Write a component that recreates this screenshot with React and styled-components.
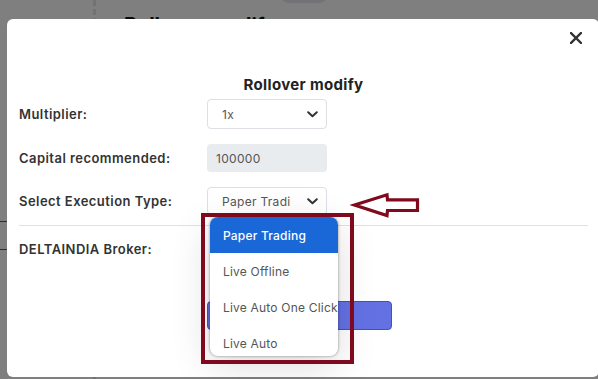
import React from 'react';
import styled, { createGlobalStyle } from 'styled-components';

const FONT = `Inter, "Open Sans", "Liberation Sans", sans-serif`;
const MAROON = '#7f0a1d';

const Global = createGlobalStyle`
  html, body { margin: 0; padding: 0; }
  body {
    width: 598px; height: 379px; overflow: hidden; background: #fff;
    font-family: ${FONT};
  }
`;

const Page = styled.div`
  position: relative;
  width: 598px;
  height: 379px;
  overflow: hidden;
`;

/* ---------- background page (under the overlay) ---------- */
const BackPage = styled.div`
  display: flex;
  height: 100%;
`;
const Gutter = styled.div`
  width: 93px;
  border-right: 3px dashed #e4e4ea;
  display: flex;
  flex-direction: column;
  padding-top: 221px;
  gap: 27px;
`;
const BlueRule = styled.div`
  height: 1px;
  background: #3b55d8;
`;
const BackMain = styled.div`
  flex: 1;
  display: flex;
  flex-direction: column;
`;
const Crumbs = styled.div`
  display: flex;
  align-items: center;
  margin-top: -19px;
  padding-left: 86px;
  height: 19px;
`;
const Crumb = styled.span`
  font: 400 12.5px ${FONT};
  color: #5a49c8;
  width: 99px;
  white-space: nowrap;
  overflow: hidden;
`;
const Pill = styled.span`
  width: 46px;
  height: 24px;
  border-radius: 8px;
  background: #e4e4ee;
`;
const BackTitle = styled.h1`
  margin: 13px 0 0 28px;
  font: 700 20px/24px ${FONT};
  color: #111;
`;

/* ---------- overlay + modal ---------- */
const Overlay = styled.div`
  position: absolute;
  inset: 0;
  background: rgba(0, 0, 0, 0.5);
  padding: 19px 0 0 7px;
`;
const Modal = styled.div`
  position: relative;
  width: 592px;
  height: 358px;
  background: #fff;
  border-radius: 6px;
  box-sizing: border-box;
  padding: 0 11px 0 12px;
  font-family: ${FONT};
`;
const Header = styled.div`
  display: flex;
  justify-content: flex-end;
  padding: 13px 6px 0 0;
  height: 12px;
`;
const CloseBtn = styled.button`
  border: 0;
  background: none;
  padding: 0;
  width: 12px;
  height: 12px;
  display: flex;
  cursor: pointer;
`;
const Title = styled.h2`
  margin: 31px 0 0;
  text-align: center;
  font: 700 15px/20px ${FONT};
  letter-spacing: 0.35px;
  color: #222;
`;
const Row = styled.div`
  display: grid;
  grid-template-columns: 188px 120px;
  align-items: center;
  height: ${p => p.$h}px;
  margin-top: ${p => p.$mt}px;
`;
const Label = styled.label`
  font: 600 13px ${FONT};
  letter-spacing: 0.45px;
  color: #333;
  white-space: nowrap;
`;
const SelectBox = styled.div`
  position: relative;
  height: 100%;
  box-sizing: border-box;
  border: 1px solid #dcdfe3;
  border-radius: 4px;
  display: flex;
  align-items: center;
  padding: 0 35px 0 14px;
  font: 400 12px ${FONT};
  letter-spacing: 0.3px;
  color: #555;
  white-space: nowrap;
  overflow: hidden;
`;
const SelectText = styled.span`
  display: block;
  overflow: hidden;
`;
const Chevron = styled.svg`
  position: absolute;
  right: 8px;
  top: 50%;
  margin-top: -3px;
`;
const ReadOnly = styled.div`
  height: 100%;
  box-sizing: border-box;
  border-radius: 4px;
  background: #e9ecef;
  display: flex;
  align-items: center;
  padding: 0 9px;
  font: 400 12px ${FONT};
  letter-spacing: 0.3px;
  color: #555;
`;
const Divider = styled.hr`
  border: 0;
  border-top: 1px solid #dee2e6;
  margin: 10px 0 0;
`;
const SubmitRow = styled.div`
  display: flex;
  padding-left: 188px;
  margin-top: 39px;
`;
const Submit = styled.button`
  width: 185px;
  height: 29px;
  border: 1px solid #4452b8;
  border-radius: 4px;
  background: #6471e3;
`;

/* ---------- dropdown list ---------- */
const Menu = styled.ul`
  position: absolute;
  left: 203px;
  top: 198px;
  width: 128px;
  height: 139px;
  margin: 0;
  padding: 0;
  list-style: none;
  background: #fff;
  border-radius: 8px;
  overflow: hidden;
  box-shadow: 0 0 3px rgba(0, 0, 0, 0.45), 0 10px 40px rgba(0, 0, 0, 0.14);
`;
const Item = styled.li`
  height: 36px;
  display: flex;
  align-items: center;
  padding-left: 13px;
  white-space: nowrap;
  font: 400 12px ${FONT};
  letter-spacing: 0.2px;
  color: ${p => (p.$active ? '#fff' : '#555')};
  background: ${p => (p.$active ? '#1a68d8' : 'transparent')};
  font-weight: ${p => (p.$active ? 500 : 400)};
`;

/* ---------- annotations ---------- */
const Frame = styled.div`
  position: absolute;
  left: 201px;
  top: 213px;
  width: 153px;
  height: 151px;
  box-sizing: border-box;
  border: 4px solid ${MAROON};
  pointer-events: none;
`;
const Arrow = styled.svg`
  position: absolute;
  left: 350px;
  top: 190px;
`;

const ChevronIcon = () => (
  <Chevron width="11" height="7" viewBox="0 0 11 7">
    <polyline points="1.2,1.2 5.5,5.3 9.8,1.2" fill="none" stroke="#333" strokeWidth="2" strokeLinecap="round" strokeLinejoin="round" />
  </Chevron>
);

export default function App() {
  const options = ['Paper Trading', 'Live Offline', 'Live Auto One Click', 'Live Auto'];
  return (
    <Page>
      <Global />
      <BackPage>
        <Gutter>
          <BlueRule />
          <BlueRule />
        </Gutter>
        <BackMain>
          <Crumbs>
            <Crumb>Strategy / copy</Crumb>
            <Pill />
          </Crumbs>
          <BackTitle>Rollover modify</BackTitle>
        </BackMain>
      </BackPage>

      <Overlay>
        <Modal>
          <Header>
            <CloseBtn aria-label="Close">
              <svg width="12" height="12" viewBox="0 0 12 12">
                <path d="M1 1 L11 11 M11 1 L1 11" stroke="#333" strokeWidth="2.4" strokeLinecap="square" />
              </svg>
            </CloseBtn>
          </Header>
          <Title>Rollover modify</Title>

          <Row $h={30} $mt={4}>
            <Label>Multiplier:</Label>
            <SelectBox><SelectText>1x</SelectText><ChevronIcon /></SelectBox>
          </Row>
          <Row $h={28} $mt={15}>
            <Label>Capital recommended:</Label>
            <ReadOnly>100000</ReadOnly>
          </Row>
          <Row $h={28} $mt={15}>
            <Label>Select Execution Type:</Label>
            <SelectBox><SelectText>Paper Trading</SelectText><ChevronIcon /></SelectBox>
          </Row>
          <Divider />
          <Row $h={27} $mt={9}>
            <Label>DELTAINDIA Broker:</Label>
            <span />
          </Row>
          <SubmitRow>
            <Submit aria-label="Submit" />
          </SubmitRow>

          <Menu>
            {options.map((o, i) => (
              <Item key={o} $active={i === 0}>{o}</Item>
            ))}
          </Menu>
        </Modal>
      </Overlay>

      <Frame />
      <Arrow width="72" height="30" viewBox="0 0 72 30">
        <polygon
          points="4.5,15 37,4.8 37.5,9.8 67.5,9.8 67.5,20.5 37.5,20.5 37,25.5"
          fill="none"
          stroke={MAROON}
          strokeWidth="3.2"
          strokeLinejoin="miter"
        />
      </Arrow>
    </Page>
  );
}
